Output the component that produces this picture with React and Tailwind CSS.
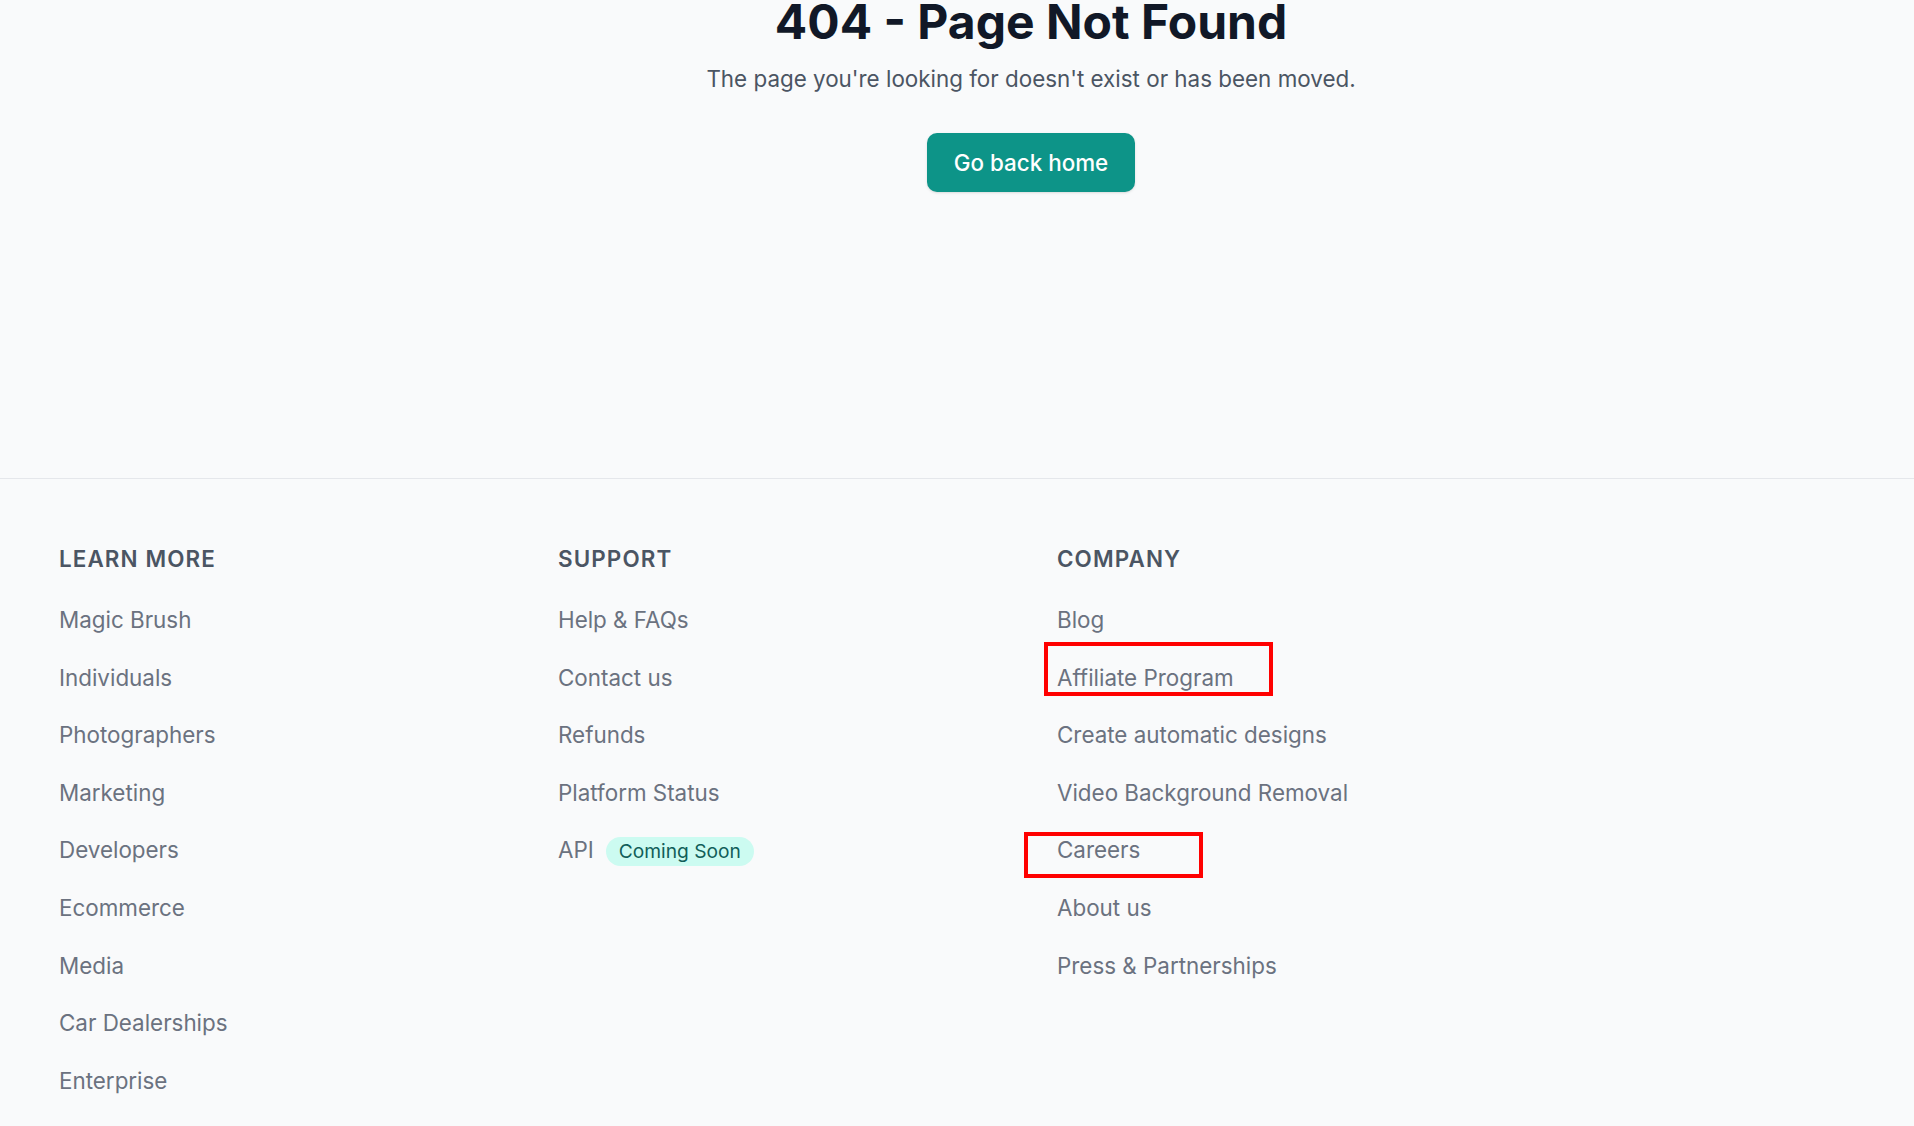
import React from "react";

const learn = ["Magic Brush", "Individuals", "Photographers", "Marketing", "Developers", "Ecommerce", "Media", "Car Dealerships", "Enterprise"];
const support = ["Help & FAQs", "Contact us", "Refunds", "Platform Status", "API"];
const company = ["Blog", "Affiliate Program", "Create automatic designs", "Video Background Removal", "Careers", "About us", "Press & Partnerships"];

function Column({ title, items }) {
  return (
    <div className="flex flex-col">
      <h3 className="text-[22.4px] leading-[33.6px] font-semibold uppercase tracking-[0.05em] text-[#4b5563]">{title}</h3>
      <ul className="mt-[28px] flex flex-col gap-[24px]">
        {items.map((it) => (
          <li key={it} className="flex items-center text-[22.4px] leading-[33.6px] text-[#6b7280]">
            <a href="#" className="whitespace-nowrap">{it}</a>
            {it === "API" && (
              <span className="ml-[12px] mt-[2px] inline-flex h-[29.4px] items-center rounded-full bg-[#ccfbf1] px-[13px] text-[19.2px] font-normal leading-none text-[#115e59]">
                Coming Soon
              </span>
            )}
          </li>
        ))}
      </ul>
    </div>
  );
}

export default function App() {
  return (
    <div className="relative min-h-screen overflow-hidden bg-[#f9fafb] font-['Inter',sans-serif]">
      <section className="flex h-[478px] flex-col items-center pl-[148px]">
        <h1 className="-mt-[2.5px] text-[48px] leading-[48px] font-bold text-[#111827]">404 - Page Not Found</h1>
        <p className="mt-[16.5px] text-[22.4px] leading-[33.6px] text-[#4b5563]">
          The page you're looking for doesn't exist or has been moved.
        </p>
        <a
          href="#"
          className="mt-[37.5px] rounded-[10px] bg-[#0d9488] px-[27px] py-[12.7px] text-[22.4px] leading-[33.6px] font-medium text-white shadow-sm"
        >
          Go back home
        </a>
      </section>
      <footer className="border-t border-[#e5e7eb] px-[59px] pt-[62.5px] pb-[40px]">
        <div className="grid grid-cols-[499px_499px_499px]">
          <Column title="Learn More" items={learn} />
          <Column title="Support" items={support} />
          <Column title="Company" items={company} />
        </div>
      </footer>
      <div className="pointer-events-none absolute left-[1044px] top-[642px] h-[54px] w-[229px] border-4 border-[#ff0000]" />
      <div className="pointer-events-none absolute left-[1024px] top-[832px] h-[46px] w-[179px] border-4 border-[#ff0000]" />
    </div>
  );
}
